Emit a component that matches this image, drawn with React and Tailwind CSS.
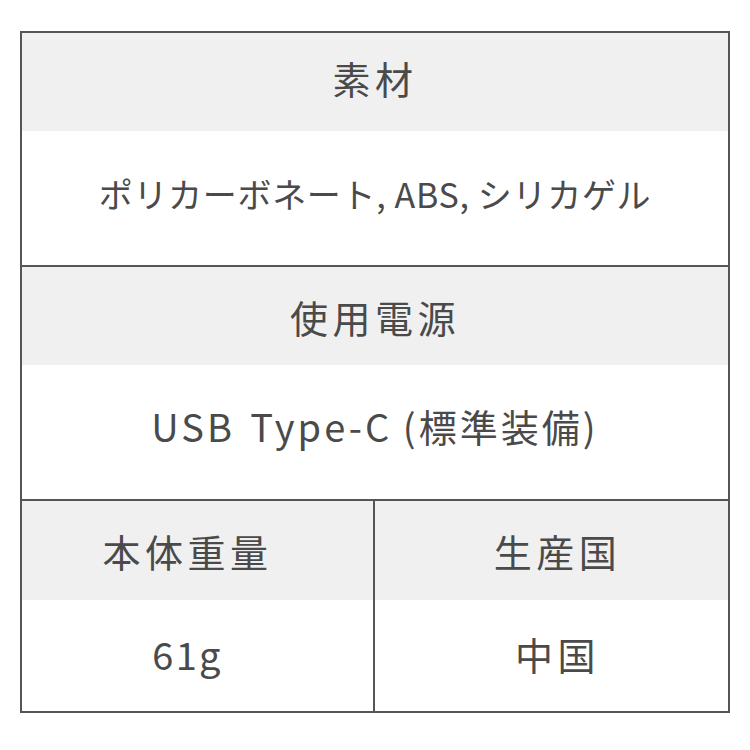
export default function App() {
  const font = { fontFamily: '"Noto Sans CJK JP", "Noto Sans", sans-serif' };
  return (
    <div className="w-[750px] h-[750px] bg-white pt-[31px] pl-[20px]" style={font}>
      <div className="w-[710px] border-2 border-[#555555] text-[#4a4a4a] text-[38px] tracking-[0.12em]">
        <div className="h-[98px] bg-[#f0f0f0] flex items-center justify-center pb-[10px]">素材</div>
        <div className="h-[136px] flex items-center justify-center text-[34px] tracking-[0.02em] border-b-2 border-[#555555] pb-[10px]">
          ポリカーボネート, ABS, シリカゲル
        </div>
        <div className="h-[98px] bg-[#f0f0f0] flex items-center justify-center">使用電源</div>
        <div className="h-[136px] flex items-center justify-center tracking-[0.08em] [word-spacing:0.1em] border-b-2 border-[#555555] pb-[14px]">
          {"USB Type-C\u2009(標準装備)"}
        </div>
        <div className="grid grid-cols-2">
          <div className="border-r-2 border-[#555555]">
            <div className="h-[99px] bg-[#f0f0f0] flex items-center justify-center pr-[20px]">本体重量</div>
            <div className="h-[111px] flex items-center justify-center pr-[20px] pb-[4px] tracking-[0.06em]">61g</div>
          </div>
          <div>
            <div className="h-[99px] bg-[#f0f0f0] flex items-center justify-center pl-[12px]">生産国</div>
            <div className="h-[111px] flex items-center justify-center pl-[12px] pb-[4px]">中国</div>
          </div>
        </div>
      </div>
    </div>
  );
}
